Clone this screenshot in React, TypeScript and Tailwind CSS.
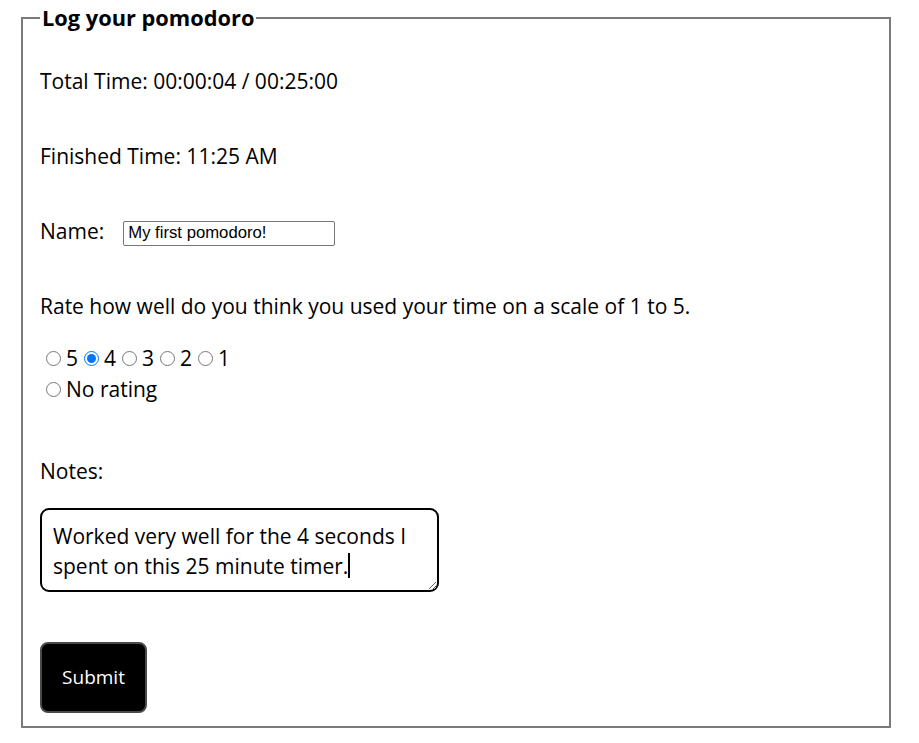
import React from "react";

export default function App() {
  const sans = { fontFamily: '"Open Sans", "Noto Sans", sans-serif' };
  return (
    <div className="min-h-[743px] w-[919px] bg-white text-black" style={sans}>
      <div className="pt-[5px] pl-[21px]">
        <fieldset className="w-[870px] h-[723px] border-2 border-[#7a7a7a] px-[17px] pb-[14px]">
          <legend className="px-[2px] text-[21.8px] font-bold leading-[26px]">Log your pomodoro</legend>
          <div className="flex flex-col text-[21px]">
            <div className="mt-[36px] leading-[28px]">Total Time: 00:00:04 / 00:25:00</div>
            <div className="mt-[47px] leading-[28px]">Finished Time: 11:25 AM</div>
            <div className="mt-[47px] flex items-center h-[28px]">
              <span className="leading-[28px]">Name:</span>
              <input
                type="text"
                defaultValue="My first pomodoro!"
                className="ml-[19px] mt-[4px] w-[212px] h-[25px] border border-[#767676] rounded-[2px] px-[4px] text-[16.7px] outline-none"
                style={{ fontFamily: '"Liberation Sans", Arial, sans-serif' }}
              />
            </div>
            <div className="mt-[47px] leading-[28px]">Rate how well do you think you used your time on a scale of 1 to 5.</div>
            <div className="mt-[24px] flex items-center leading-[28px]">
              {["5", "4", "3", "2", "1"].map((v) => (
                <label key={v} className="flex items-center">
                  <input type="radio" name="rating" defaultChecked={v === "4"} className="w-[15px] h-[15px] ml-[6px] mr-[5px]" />
                  <span>{v}</span>
                </label>
              ))}
            </div>
            <div className="mt-[3px] flex items-center leading-[28px]">
              <label className="flex items-center">
                <input type="radio" name="rating" className="w-[15px] h-[15px] ml-[6px] mr-[5px]" />
                <span>No rating</span>
              </label>
            </div>
            <div className="mt-[54px] leading-[28px]">Notes:</div>
            <div className="relative mt-[23px] w-[399px] h-[84px]">
              <textarea
                defaultValue="Worked very well for the 4 seconds I spent on this 25 minute timer."
                className="block w-[399px] h-[84px] border-2 border-black rounded-[9px] px-[11px] pt-[11px] text-[21px] leading-[30px] outline-none resize"
                style={sans}
              />
              <span className="absolute left-[308px] top-[45px] w-[2px] h-[25px] bg-black" />
            </div>
            <button
              className="mt-[50px] w-[107px] h-[71px] bg-black text-white text-[19px] rounded-[8px] border-2 border-[#4a4a4a]"
              style={sans}
            >
              Submit
            </button>
          </div>
        </fieldset>
      </div>
    </div>
  );
}
